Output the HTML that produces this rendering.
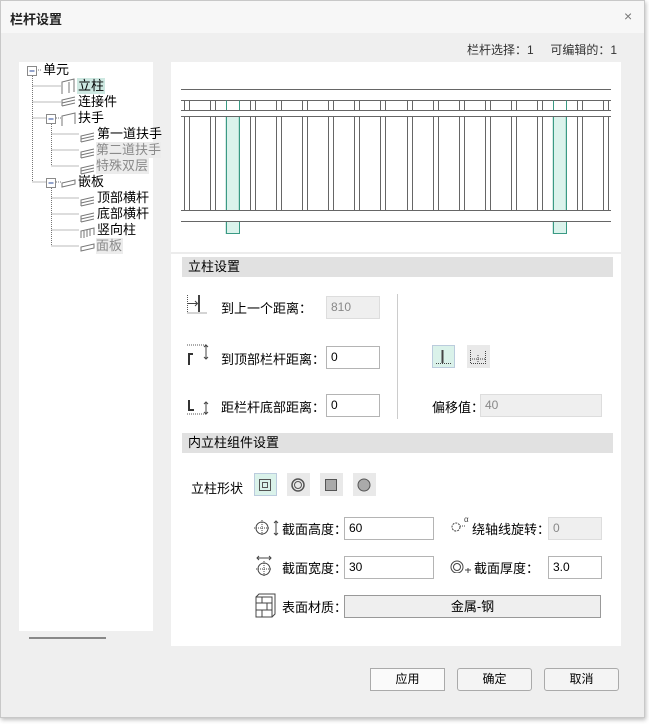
<!DOCTYPE html>
<html><head><meta charset="utf-8"><style>
*{margin:0;padding:0;box-sizing:border-box}
body{width:649px;height:724px;background:#fff;position:relative;overflow:hidden;font-family:"Liberation Sans","Noto Sans CJK SC","WenQuanYi Zen Hei",sans-serif;font-size:12px;color:#000}
.a{position:absolute;white-space:nowrap}
.win{left:0;top:0;width:645px;height:718px;background:#efefef;border:1px solid #c8c8c8;box-shadow:1px 2px 4px rgba(0,0,0,.25)}
.tb{left:1px;top:1px;width:643px;height:32px;background:#f7f7f7}
.inp{position:absolute;height:23px;border:1px solid #b4b4b4;background:#fff;font-size:12px;padding-left:4px;line-height:21px}
.dis{background:#efefef;border-color:#ddd;color:#888}
.hdr{position:absolute;left:182px;width:431px;height:20px;background:#e1e1e1;font-size:13px;padding-left:6px;line-height:20px}
.btn{position:absolute;height:23px;width:75px;border:1px solid #aaa;border-radius:3px;background:#f4f4f4;text-align:center;line-height:21px;font-size:12px}
.sb{position:absolute;width:23px;height:23px;background:#e9e9e9}
.ti{position:absolute;font-size:13px;line-height:16px;height:16px;white-space:nowrap}
.g{color:#8a8a8a;background:#ececec}
</style></head><body>
<div class="a win"></div>
<div class="a tb"></div>
<div class="a" style="left:10px;top:9px;font-size:13px;font-weight:bold;color:#222">栏杆设置</div>
<div class="a" style="left:624px;top:8px;font-size:14px;color:#777">×</div>
<div class="a" style="left:467px;top:41px;font-size:12px;color:#333">栏杆选择：1&nbsp;&nbsp;&nbsp;&nbsp;&nbsp;可编辑的：1</div>

<!-- tree -->
<div class="a" style="left:19px;top:62px;width:134px;height:569px;background:#fff"></div>
<div class="a" style="left:29px;top:637px;width:77px;height:2px;background:#888"></div>
<svg class="a" style="left:19px;top:62px" width="134" height="200">
<g stroke="#777" stroke-dasharray="1 1" fill="none">
<path d="M13.5 14V120M13.5 24H42M13.5 40H42M13.5 56H27M13.5 120H27M19 8H22M32.5 62V104M32.5 126V184M37 56H42M37 120H42M32.5 72H60M32.5 88H60M32.5 104H60M32.5 136H60M32.5 152H60M32.5 168H60M32.5 184H60"/>
</g>
<g fill="#fff" stroke="#8a8a8a"><rect x="8.5" y="4.5" width="9" height="9"/><rect x="27.5" y="52.5" width="9" height="9"/><rect x="27.5" y="116.5" width="9" height="9"/></g>
<g stroke="#2a4a9a"><path d="M10.5 9H15.5M29.5 57H34.5M29.5 121H34.5"/></g>
<g stroke="#777" fill="none">
<path d="M43 32V20L55 17V30M50 20V31"/>
<path d="M43 44V38L56 35M43 41L56 38M43 44L56 41"/>
<path d="M43 64V54L56 51V62"/>
<path d="M62 80V74L75 71M62 77L75 74M62 80L75 77"/><path d="M62 96V90L75 87M62 93L75 90M62 96L75 93"/><path d="M62 112V106L75 103M62 109L75 106M62 112L75 109"/>
<path d="M43 125L56 122V118L43 121Z"/>
<path d="M62 144V138L75 135M62 141L75 138M62 144L75 141"/><path d="M62 160V154L75 151M62 157L75 154M62 160L75 157"/>
<path d="M62 176V169L75 166V173M65 176V169M68 175V168M71 174V167"/><path d="M62 189L75 186V182L62 185Z"/>
</g>
</svg>
<div class="ti" style="left:43px;top:62px">单元</div>
<div class="ti" style="left:77px;top:78px;background:#cde8e1;padding:0 1px">立柱</div>
<div class="ti" style="left:78px;top:94px">连接件</div>
<div class="ti" style="left:78px;top:110px">扶手</div>
<div class="ti" style="left:97px;top:126px">第一道扶手</div>
<div class="ti g" style="left:96px;top:142px">第二道扶手</div>
<div class="ti g" style="left:96px;top:158px;padding-right:1px">特殊双层</div>
<div class="ti" style="left:78px;top:174px">嵌板</div>
<div class="ti" style="left:97px;top:190px">顶部横杆</div>
<div class="ti" style="left:97px;top:206px">底部横杆</div>
<div class="ti" style="left:97px;top:222px">竖向柱</div>
<div class="ti g" style="left:96px;top:238px;padding-right:1px">面板</div>

<!-- right panel -->
<div class="a" style="left:171px;top:62px;width:450px;height:584px;background:#fff"></div>
<div class="a" style="left:171px;top:62px;width:450px;height:192px;border-bottom:2px solid #ececec"></div>
<svg class="a" style="left:170px;top:60px" width="450" height="190">
<g fill="#dbf3ec" stroke="#3a9a84"><path d="M56.3 56.3V173.5H69.3V56.3Z"/><path d="M383.3 56.3V173.5H396.3V56.3Z"/></g>
<g stroke="#666" stroke-width="1" fill="none">
<path d="M11 29.5H441M11 40.5H441M11 50.5H441M11 56.5H441M11 150.5H441M11 161.5H441"/>
<path d="M14.5 40V151M19.5 40V151M40.5 40V151M45.5 40V151M80.5 40V151M85.5 40V151M106.5 40V151M111.5 40V151M132.5 40V151M137.5 40V151M158.5 40V151M163.5 40V151M184.5 40V151M189.5 40V151M210.5 40V151M215.5 40V151M237.5 40V151M242.5 40V151M263.5 40V151M268.5 40V151M289.5 40V151M294.5 40V151M315.5 40V151M320.5 40V151M341.5 40V151M346.5 40V151M367.5 40V151M372.5 40V151M407.5 40V151M412.5 40V151M433.5 40V151M438.5 40V151"/>
</g>
<g fill="#fff" stroke="none"><rect x="10" y="51" width="432" height="5"/><rect x="10" y="151" width="432" height="10"/></g>
<g fill="#dbf3ec" stroke="#3a9a84"><path d="M56.5 40.5V50.5M69.5 40.5V50.5M56.5 56.5V150.5M69.5 56.5V150.5M56.5 161.5V173.5H69.5V161.5"/><path d="M383.5 40.5V50.5M396.5 40.5V50.5M383.5 56.5V150.5M396.5 56.5V150.5M383.5 161.5V173.5H396.5V161.5"/></g>
<g stroke="#666"><path d="M11 50.5H441M11 56.5H441M11 150.5H441M11 161.5H441"/></g>
</svg>

<div class="hdr" style="top:257px">立柱设置</div>
<div class="hdr" style="top:433px">内立柱组件设置</div>

<svg class="a" style="left:185px;top:290px" width="30" height="140">
<g stroke="#444" fill="none"><path d="M13.5 5V22M3 13.5H12M10 11L12.5 13.5L10 16" stroke-width="1"/><path d="M14 5V22" stroke-width="2"/></g>
<g stroke="#555" stroke-dasharray="1 1" fill="none"><path d="M2.5 5V23H22M2 55H22M2 124H22"/></g>
<path d="M4 75V64H8" stroke="#333" stroke-width="2" fill="none"/><path d="M21 55V69M19 57L21 55L23 57M19 67L21 69L23 67" stroke="#444" fill="none"/>
<path d="M4 110V120H9" stroke="#333" stroke-width="2" fill="none"/><path d="M21 112V124M19 114L21 112L23 114M19 122L21 124L23 122" stroke="#444" fill="none"/>
</svg>
<div class="a" style="left:221px;top:298px;font-size:13px">到上一个距离：</div>
<div class="a" style="left:221px;top:349px;font-size:13px">到顶部栏杆距离：</div>
<div class="a" style="left:221px;top:397px;font-size:13px">距栏杆底部距离：</div>
<div class="inp dis" style="left:326px;top:296px;width:54px">810</div>
<div class="inp" style="left:326px;top:346px;width:54px">0</div>
<div class="inp" style="left:326px;top:394px;width:54px">0</div>
<div class="a" style="left:397px;top:294px;width:1px;height:125px;background:#ccc"></div>
<div class="sb" style="left:432px;top:345px;background:#daf2ea;border:1px solid #bcd"></div>
<div class="sb" style="left:467px;top:345px"></div>
<svg class="a" style="left:432px;top:345px" width="60" height="24"><g fill="none" stroke="#444"><path d="M10.5 5V18" stroke-width="2"/><path d="M4 18.5H19" stroke-dasharray="1 1"/><path d="M38.5 5V18.5H53.5V5M46 10V18M38 14H54" stroke-dasharray="1 1"/></g></svg>
<div class="a" style="left:432px;top:397px;font-size:13px">偏移值：</div>
<div class="inp dis" style="left:480px;top:394px;width:122px">40</div>

<div class="a" style="left:191px;top:478px;font-size:13px">立柱形状</div>
<div class="sb" style="left:254px;top:473px;background:#daf2ea;border:1px solid #bcd"></div>
<div class="sb" style="left:287px;top:473px"></div>
<div class="sb" style="left:320px;top:473px"></div>
<div class="sb" style="left:353px;top:473px"></div>
<svg class="a" style="left:254px;top:473px" width="125" height="24"><g stroke="#555" fill="none"><rect x="5.5" y="6.5" width="11" height="11"/><rect x="8.5" y="9.5" width="5" height="5"/><circle cx="44" cy="12" r="6" stroke-width="1.5"/><circle cx="44" cy="12" r="3.5"/><rect x="71.5" y="6.5" width="11" height="11" fill="#aaa"/><circle cx="110" cy="12" r="6" fill="#aaa"/></g></svg>

<svg class="a" style="left:252px;top:515px" width="30" height="110"><g stroke="#444" fill="none"><circle cx="10" cy="13" r="6"/><path d="M2 13H18M10 5V21" stroke-dasharray="1 1"/><path d="M24 6V20M22 8L24 6L26 8M22 18L24 20L26 18"/><circle cx="12" cy="54" r="6"/><path d="M4 54H20M12 46V62" stroke-dasharray="1 1"/><path d="M5 43H19M7 41L5 43L7 45M17 41L19 43L17 45"/><path d="M4 82H20V102H4ZM4 88H20M4 95H20M10 82V88M15 88V95M10 95V102M4 82L7 79H23V99L20 102"/></g></svg>
<div class="a" style="left:282px;top:519px;font-size:13px">截面高度：</div>
<div class="a" style="left:282px;top:558px;font-size:13px">截面宽度：</div>
<div class="a" style="left:282px;top:597px;font-size:13px">表面材质：</div>
<div class="inp" style="left:344px;top:517px;width:90px">60</div>
<div class="inp" style="left:344px;top:556px;width:90px">30</div>
<div class="a" style="left:344px;top:595px;width:257px;height:23px;border:1px solid #999;background:#efefef;text-align:center;line-height:21px;font-size:13px">金属-钢</div>
<svg class="a" style="left:449px;top:513px" width="24" height="60"><g stroke="#444" fill="none"><circle cx="7" cy="14" r="4" stroke-dasharray="2 1"/><path d="M11 13H17" stroke-dasharray="1 1"/><text x="15" y="9" font-size="8" fill="#444" stroke="none">α</text><circle cx="8" cy="54" r="6"/><circle cx="8" cy="54" r="3.5"/><path d="M16 57H22M19 55V60"/></g></svg>
<div class="a" style="left:472px;top:519px;font-size:13px">绕轴线旋转：</div>
<div class="a" style="left:474px;top:558px;font-size:13px">截面厚度：</div>
<div class="inp dis" style="left:548px;top:517px;width:54px">0</div>
<div class="inp" style="left:548px;top:556px;width:54px">3.0</div>

<div class="btn" style="left:370px;top:668px;border-radius:0;background:#fafafa">应用</div>
<div class="btn" style="left:457px;top:668px">确定</div>
<div class="btn" style="left:544px;top:668px">取消</div>
</body></html>
